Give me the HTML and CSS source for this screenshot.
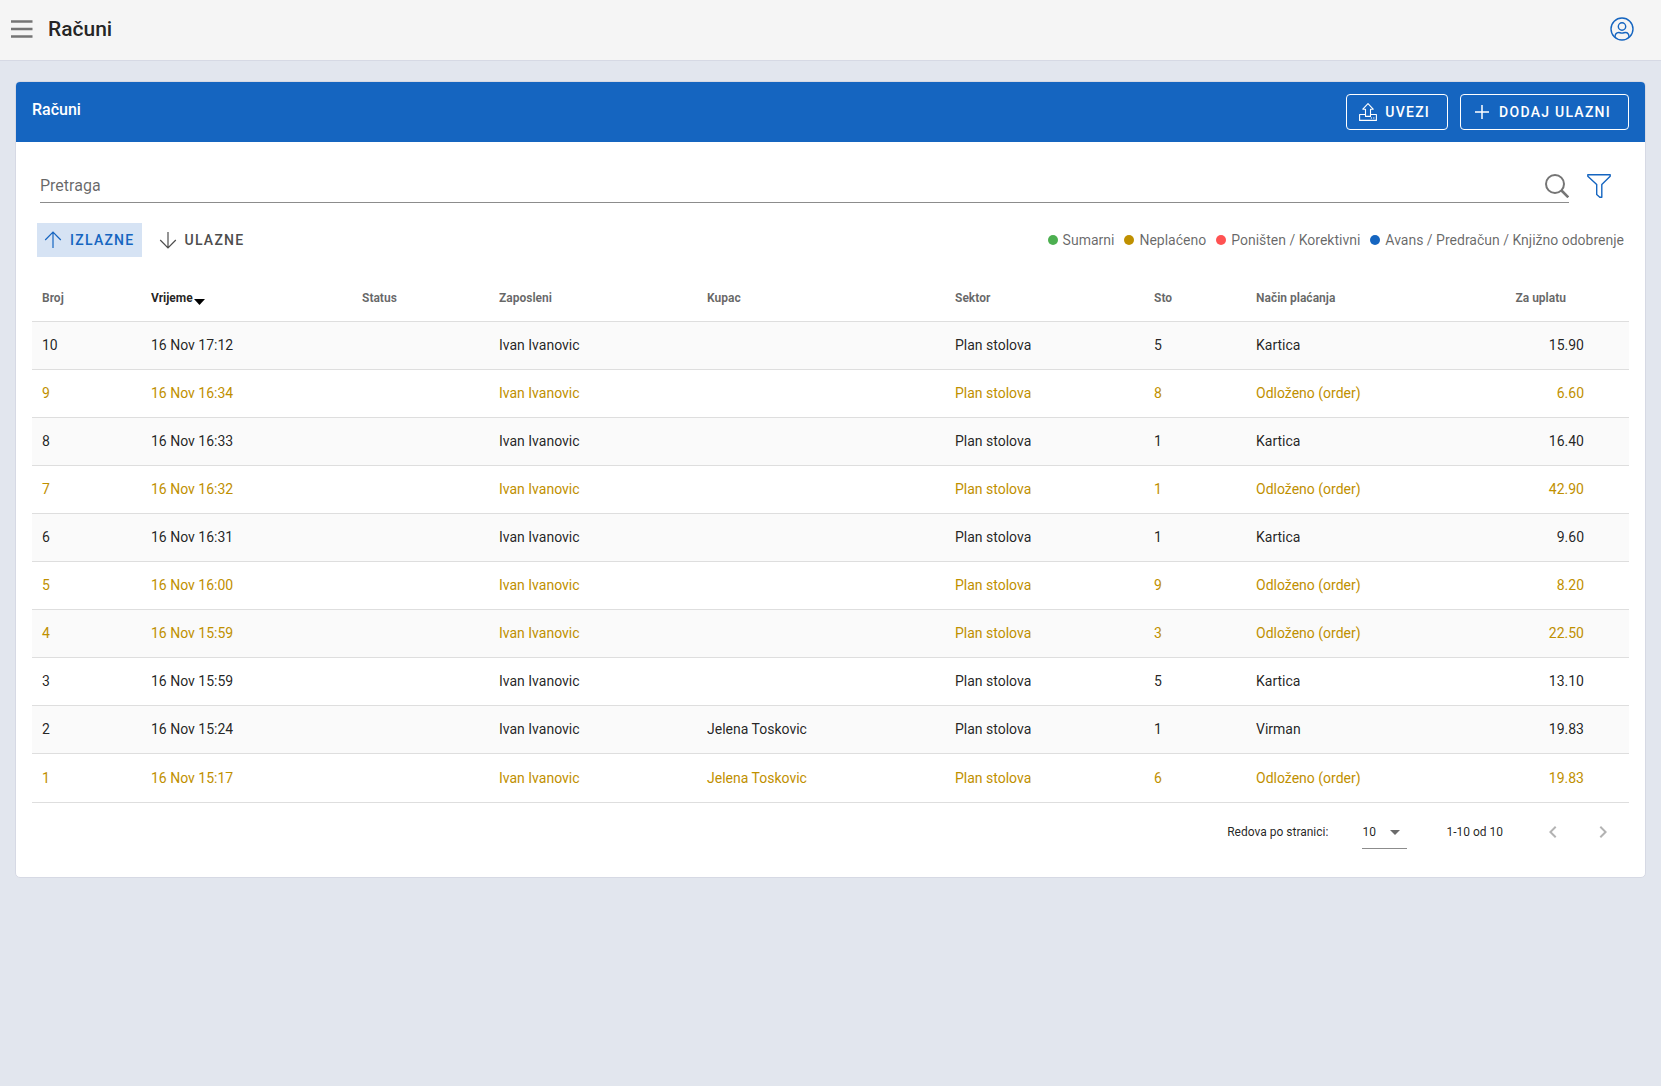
FILE: index.html
```html
<!DOCTYPE html>
<html lang="sr-Latn">
<head>
    <meta charset="UTF-8">
    <meta name="viewport" content="width=device-width, initial-scale=1.0">
    <title>Računi</title>
    <link rel="stylesheet" href="styles.css">
</head>
<body>
    <header class="app-bar">
        <button class="icon-btn menu-btn" type="button" aria-label="Meni">
            <svg width="22" height="20" viewBox="0 0 22 20" fill="none" stroke="currentColor" stroke-width="2.400"><path d="M0 2.500h21.500M0 10h21.500M0 17.500h21.500"/></svg>
        </button>
        <h1 class="app-title">Računi</h1>
        <button class="icon-btn user-btn" type="button" aria-label="Profil">
            <svg width="24" height="24" viewBox="0 0 24 24" fill="none" stroke="currentColor" stroke-width="1.4">
                <circle cx="12" cy="12" r="11"/>
                <circle cx="12" cy="9.5" r="3.7"/>
                <path d="M5 20.300c0-3 1.300-4.800 3.600-4.800 1.200 0 1.800.6 3.400.6s2.200-.6 3.400-.6c2.300 0 3.600 1.800 3.600 4.800"/>
            </svg>
        </button>
    </header>

    <main class="content">
        <section class="card">
            <div class="card-header">
                <h2 class="card-title">Računi</h2>
                <div class="card-actions">
                    <button class="btn" type="button">
                        <svg width="18" height="18" viewBox="0 0 18 18" fill="none" stroke="currentColor" stroke-width="1.1" stroke-linejoin="round">
                            <path d="M9 .6 3.800 6.200h2.700v7.200h5V6.200h2.700z"/>
                            <path d="M6.500 11.500H.6v5.900h16.800v-5.900h-5.900M11.800 15h1.200M14.200 15h1.200"/>
                        </svg>
                        Uvezi
                    </button>
                    <button class="btn" type="button">
                        <svg width="18" height="18" viewBox="0 0 18 18" fill="none" stroke="currentColor" stroke-width="1.500"><path d="M9 2v14M2 9h14"/></svg>
                        Dodaj ulazni
                    </button>
                </div>
            </div>

            <div class="card-body">
                <div class="search-row">
                    <div class="search-field">
                        <input type="text" placeholder="Pretraga" aria-label="Pretraga">
                        <svg width="24" height="24" viewBox="0 0 24 24" fill="none" stroke="currentColor" stroke-width="2"><circle cx="10" cy="10" r="9"/><path d="m16.500 16.500 6.800 6.800" stroke-width="2.600"/></svg>
                    </div>
                    <button class="icon-btn filter-btn" type="button" aria-label="Filter">
                        <svg width="24" height="24" viewBox="0 0 24 24" fill="none" stroke="currentColor" stroke-width="1.400" stroke-linejoin="round"><path d="M.8.8h22.400v1.400l-8.400 8.300v12.700h-2l-3.100-2.700v-10L.8 2.200z"/></svg>
                    </button>
                </div>

                <div class="toolbar">
                    <div class="toggle">
                        <button class="toggle-btn active" type="button">
                            <svg width="18" height="18" viewBox="0 0 18 18" fill="none" stroke="currentColor" stroke-width="1.200"><path d="M9 17V1.500M1.200 9 9 1.200 16.800 9"/></svg>
                            Izlazne
                        </button>
                        <button class="toggle-btn" type="button">
                            <svg width="18" height="18" viewBox="0 0 18 18" fill="none" stroke="currentColor" stroke-width="1.200"><path d="M9 1v15.500M1.200 9 9 16.800 16.800 9"/></svg>
                            Ulazne
                        </button>
                    </div>
                    <ul class="legend">
                        <li><span class="dot green"></span>Sumarni</li>
                        <li><span class="dot amber"></span>Neplaćeno</li>
                        <li><span class="dot red"></span>Poništen / Korektivni</li>
                        <li><span class="dot blue"></span>Avans / Predračun / Knjižno odobrenje</li>
                    </ul>
                </div>

                <table class="invoices">
                    <colgroup>
                        <col class="col-number">
                        <col class="col-time">
                        <col class="col-status">
                        <col class="col-employee">
                        <col class="col-customer">
                        <col class="col-sector">
                        <col class="col-table">
                        <col class="col-payment">
                        <col class="col-amount">
                        <col class="col-end">
                    </colgroup>
                    <thead>
                        <tr>
                            <th>Broj</th>
                            <th class="sorted">Vrijeme<svg width="11" height="6" viewBox="0 0 11 6"><path d="M0 0h11L5.500 6z"/></svg></th>
                            <th>Status</th>
                            <th>Zaposleni</th>
                            <th>Kupac</th>
                            <th>Sektor</th>
                            <th>Sto</th>
                            <th>Način plaćanja</th>
                            <th class="amount">Za uplatu</th>
                            <th></th>
                        </tr>
                    </thead>
                    <tbody>
                        <tr><td>10</td><td>16 Nov 17:12</td><td></td><td>Ivan Ivanovic</td><td></td><td>Plan stolova</td><td>5</td><td>Kartica</td><td class="amount">15.90</td><td></td></tr>
                        <tr class="unpaid"><td>9</td><td>16 Nov 16:34</td><td></td><td>Ivan Ivanovic</td><td></td><td>Plan stolova</td><td>8</td><td>Odloženo (order)</td><td class="amount">6.60</td><td></td></tr>
                        <tr><td>8</td><td>16 Nov 16:33</td><td></td><td>Ivan Ivanovic</td><td></td><td>Plan stolova</td><td>1</td><td>Kartica</td><td class="amount">16.40</td><td></td></tr>
                        <tr class="unpaid"><td>7</td><td>16 Nov 16:32</td><td></td><td>Ivan Ivanovic</td><td></td><td>Plan stolova</td><td>1</td><td>Odloženo (order)</td><td class="amount">42.90</td><td></td></tr>
                        <tr><td>6</td><td>16 Nov 16:31</td><td></td><td>Ivan Ivanovic</td><td></td><td>Plan stolova</td><td>1</td><td>Kartica</td><td class="amount">9.60</td><td></td></tr>
                        <tr class="unpaid"><td>5</td><td>16 Nov 16:00</td><td></td><td>Ivan Ivanovic</td><td></td><td>Plan stolova</td><td>9</td><td>Odloženo (order)</td><td class="amount">8.20</td><td></td></tr>
                        <tr class="unpaid"><td>4</td><td>16 Nov 15:59</td><td></td><td>Ivan Ivanovic</td><td></td><td>Plan stolova</td><td>3</td><td>Odloženo (order)</td><td class="amount">22.50</td><td></td></tr>
                        <tr><td>3</td><td>16 Nov 15:59</td><td></td><td>Ivan Ivanovic</td><td></td><td>Plan stolova</td><td>5</td><td>Kartica</td><td class="amount">13.10</td><td></td></tr>
                        <tr><td>2</td><td>16 Nov 15:24</td><td></td><td>Ivan Ivanovic</td><td>Jelena Toskovic</td><td>Plan stolova</td><td>1</td><td>Virman</td><td class="amount">19.83</td><td></td></tr>
                        <tr class="unpaid"><td>1</td><td>16 Nov 15:17</td><td></td><td>Ivan Ivanovic</td><td>Jelena Toskovic</td><td>Plan stolova</td><td>6</td><td>Odloženo (order)</td><td class="amount">19.83</td><td></td></tr>
                    </tbody>
                </table>

                <div class="table-footer">
                    <label for="pageSize">Redova po stranici:</label>
                    <div class="page-size">
                        <select id="pageSize">
                            <option>5</option>
                            <option selected>10</option>
                            <option>15</option>
                        </select>
                        <svg width="10" height="5" viewBox="0 0 10 5"><path d="M0 0h10L5 5z"/></svg>
                    </div>
                    <span class="page-range">1-10 od 10</span>
                    <div class="pager">
                        <button class="icon-btn" type="button" aria-label="Prethodna" disabled>
                            <svg width="24" height="24" viewBox="0 0 24 24"><path d="M15.410 16.580 10.830 12l4.580-4.590L14 6l-6 6 6 6z"/></svg>
                        </button>
                        <button class="icon-btn" type="button" aria-label="Sljedeća" disabled>
                            <svg width="24" height="24" viewBox="0 0 24 24"><path d="M8.590 16.580 13.170 12 8.590 7.410 10 6l6 6-6 6z"/></svg>
                        </button>
                    </div>
                </div>
            </div>
        </section>
    </main>
</body>
</html>
```

FILE: styles.css
```css
* {
    box-sizing: border-box;
}
body {
    margin: 0;
    background-color: #e2e6ee;
    color: rgba(0, 0, 0, 0.87);
    font-family: Roboto, sans-serif;
    font-size: 14px;
}
button, input, select {
    font-family: inherit;
}
svg {
    display: block;
    flex-shrink: 0;
}
h1, h2 {
    margin: 0;
    font-weight: 500;
}
.icon-btn {
    padding: 0;
    border: none;
    background: none;
    cursor: pointer;
}

/* Top bar */
.app-bar {
    display: flex;
    align-items: center;
    height: 61px;
    padding: 0 27px 2px 11px;
    background-color: #f5f5f5;
    border-bottom: 1px solid #d6d9e4;
}
.menu-btn {
    color: #757575;
}
.app-title {
    margin-left: 15px;
    font-size: 21px;
}
.user-btn {
    margin-left: auto;
    color: #1565c0;
}

/* Card */
.content {
    padding: 20px 15px;
}
.card {
    background-color: #fff;
    border: 1px solid #d6d9e4;
    border-radius: 5px;
    overflow: hidden;
}
.card-header {
    display: flex;
    justify-content: space-between;
    align-items: flex-start;
    padding: 12px 16px;
    background-color: #1565c0;
    color: #fff;
}
.card-title {
    font-size: 16px;
    line-height: 32px;
}
.card-actions {
    display: flex;
    gap: 12px;
}
.btn, .toggle-btn {
    display: flex;
    align-items: center;
    gap: 8px;
    border: none;
    background: none;
    font-size: 14px;
    font-weight: 500;
    letter-spacing: 0.09em;
    text-transform: uppercase;
    cursor: pointer;
}
.btn {
    height: 36px;
    padding: 0 17px 0 12px;
    border: 1px solid #fff;
    border-radius: 4px;
    color: #fff;
}
.card-body {
    padding: 28px 16px 16px;
}

/* Search */
.search-row {
    display: flex;
    align-items: flex-end;
    gap: 18px;
    padding: 0 18px 0 8px;
}
.search-field {
    display: flex;
    flex: 1;
    align-items: flex-end;
    height: 33px;
    padding-bottom: 4px;
    border-bottom: 1px solid #8c8c8c;
    color: #757575;
}
.search-field input {
    flex: 1;
    min-width: 0;
    height: 26px;
    padding: 0;
    border: none;
    outline: none;
    background: none;
    font-size: 16px;
}
.search-field input::placeholder {
    color: rgba(0, 0, 0, 0.6);
}
.filter-btn {
    padding-bottom: 5px;
    color: #1565c0;
}

/* Type toggle and legend */
.toolbar {
    display: flex;
    justify-content: space-between;
    align-items: center;
    padding: 20px 5px 17px;
}
.toggle {
    display: flex;
    gap: 10px;
}
.toggle-btn {
    height: 34px;
    padding: 0 7px;
    color: #4d4d4d;
}
.toggle-btn.active {
    background-color: #d6e3f4;
    color: #1565c0;
}
.legend {
    display: flex;
    gap: 10px;
    margin: 0;
    padding: 0;
    list-style: none;
    color: rgba(0, 0, 0, 0.6);
}
.legend li {
    display: flex;
    align-items: center;
    gap: 5px;
}
.dot {
    width: 10px;
    height: 10px;
    border-radius: 50%;
}
.dot.green {
    background-color: #4caf50;
}
.dot.amber {
    background-color: #bf9000;
}
.dot.red {
    background-color: #ff5252;
}
.dot.blue {
    background-color: #1565c0;
}

/* Invoices table */
.invoices {
    width: 100%;
    table-layout: fixed;
    border-collapse: separate;
    border-spacing: 0;
}
.col-number { width: 109px; }
.col-time { width: 211px; }
.col-status { width: 137px; }
.col-employee { width: 208px; }
.col-customer { width: 248px; }
.col-sector { width: 199px; }
.col-table { width: 102px; }
.col-payment { width: 200px; }
.col-amount { width: 148px; }
.col-end { width: 35px; }

.invoices th, .invoices td {
    height: 48px;
    padding: 0 10px;
    border-bottom: 1px solid #dedede;
    text-align: left;
}
.invoices td {
    padding-bottom: 1px;
}
.invoices th {
    color: rgba(0, 0, 0, 0.6);
    font-size: 12px;
    font-weight: 700;
}
.invoices th.sorted {
    color: rgba(0, 0, 0, 0.87);
}
.sorted svg {
    display: inline-block;
    margin-left: 1px;
    vertical-align: -3px;
}
.invoices .amount {
    text-align: right;
}
.invoices th.amount {
    padding-right: 28px;
}
.invoices tbody tr:nth-child(odd) {
    background-color: #fafafa;
}
.invoices .unpaid {
    color: #bf9000;
}
.invoices tbody tr:last-child td {
    height: 49px;
    padding-bottom: 0;
}

/* Pagination */
.table-footer {
    display: flex;
    justify-content: flex-end;
    align-items: center;
    height: 58px;
    padding-right: 14px;
    font-size: 12px;
}
.page-size {
    position: relative;
    margin: 0 39px 0 34px;
}
.page-size select {
    display: block;
    width: 45px;
    height: 33px;
    padding: 0;
    border: none;
    border-bottom: 1px solid #8c8c8c;
    border-radius: 0;
    outline: none;
    appearance: none;
    background: none;
    color: inherit;
    font-size: 12px;
}
.page-size svg {
    position: absolute;
    top: 14px;
    right: 7px;
    fill: #6b6b6b;
    pointer-events: none;
}
.pager {
    display: flex;
    gap: 26px;
    margin-left: 38px;
}
.pager svg {
    fill: #b3b3b3;
}
```
